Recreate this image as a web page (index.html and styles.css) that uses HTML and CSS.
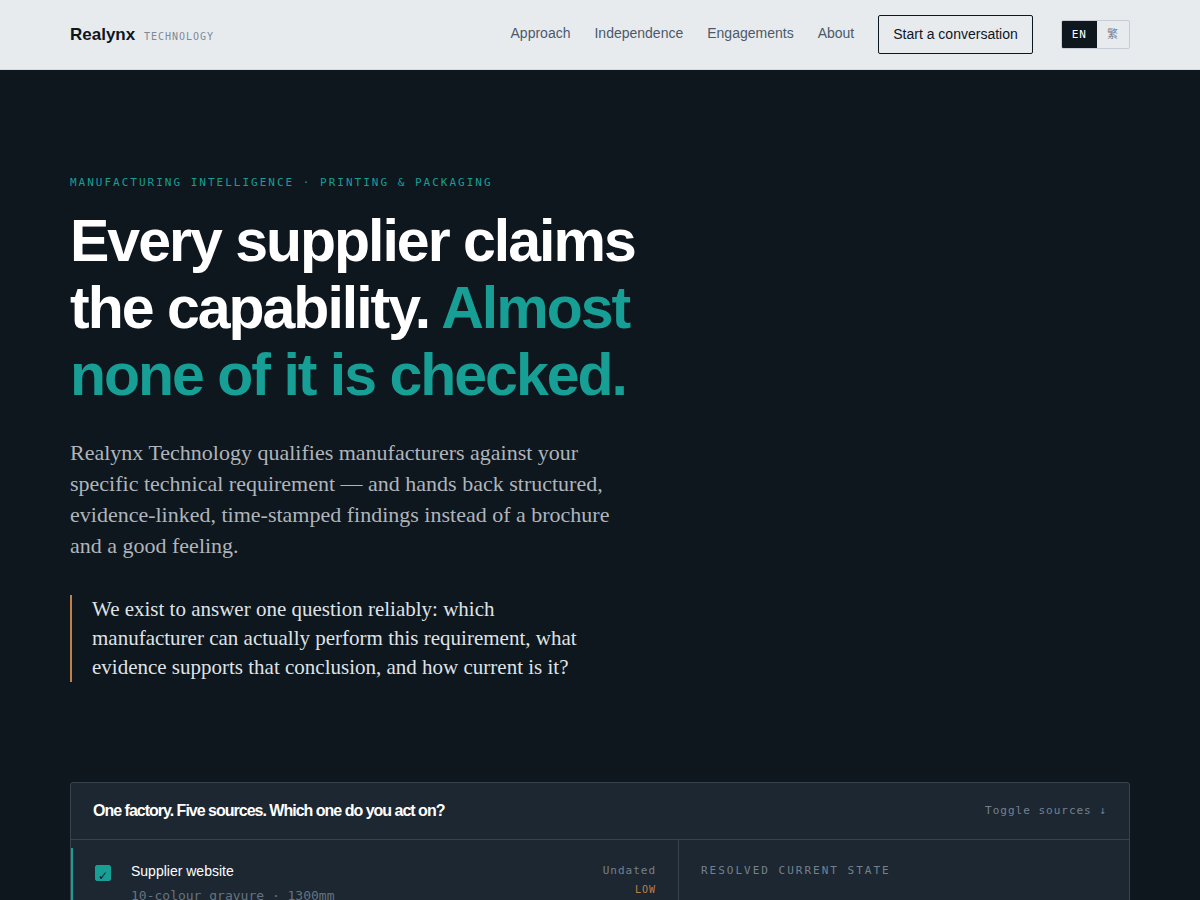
FILE: index.html
```
<!DOCTYPE html>
<html lang="en">
<head>
    <meta charset="UTF-8">
    <meta name="viewport" content="width=device-width, initial-scale=1.0">
    <title>Realynx Technology</title>
    <link rel="stylesheet" href="styles.css">
</head>
<body>
    <header class="site-header">
        <div class="wrap nav">
            <a class="brand" href="#">Realynx <span class="brand-sub">Technology</span></a>
            <nav class="nav-links">
                <a class="nav-link" href="#approach">Approach</a>
                <a class="nav-link" href="#independence">Independence</a>
                <a class="nav-link" href="#engagements">Engagements</a>
                <a class="nav-link" href="#about">About</a>
                <a class="nav-cta" href="#contact">Start a conversation</a>
            </nav>
            <div class="lang">
                <button class="active" type="button">EN</button>
                <button type="button" lang="zh-Hant">繁</button>
            </div>
        </div>
    </header>

    <main class="hero">
        <div class="wrap">
            <p class="eyebrow">Manufacturing Intelligence · Printing &amp; Packaging</p>
            <h1>Every supplier claims<br>the capability. <em>Almost<br>none of it is checked.</em></h1>
            <p class="lede">Realynx Technology qualifies manufacturers against your<br>specific technical requirement — and hands back structured,<br>evidence-linked, time-stamped findings instead of a brochure<br>and a good feeling.</p>
            <blockquote class="question">We exist to answer one question reliably: which<br>manufacturer can actually perform this requirement, what<br>evidence supports that conclusion, and how current is it?</blockquote>

            <!-- Source demo -->
            <section class="panel">
                <div class="panel-head">
                    <h2>One factory. Five sources. Which one do you act on?</h2>
                    <span class="hint">Toggle sources ↓</span>
                </div>
                <div class="panel-body">
                    <div class="sources">
                        <label class="source" for="src-website">
                            <input type="checkbox" id="src-website" checked>
                            <span class="source-text">
                                <span class="source-name">Supplier website</span>
                                <span class="source-claim">10-colour gravure · 1300mm</span>
                            </span>
                            <span class="source-meta">
                                <span class="source-date">Undated</span>
                                <span class="source-level">LOW</span>
                            </span>
                        </label>
                    </div>
                    <div class="resolved">
                        <h3>Resolved current state</h3>
                    </div>
                </div>
            </section>
        </div>
    </main>
</body>
</html>
```
FILE: styles.css
```
* {
    box-sizing: border-box;
}
body {
    margin: 0;
    background: #0e161e;
    color: #fff;
    font-family: "Liberation Sans", Arial, sans-serif;
}
a {
    color: inherit;
    text-decoration: none;
}
.wrap {
    max-width: 1124px;
    margin: 0 auto;
    padding: 0 32px;
}

/* Header */
.site-header {
    background: #e8ebee;
    border-bottom: 1px solid #d5dae0;
}
.nav {
    display: flex;
    align-items: center;
    min-height: 69px;
}
.brand {
    margin-right: auto;
    color: #0e161e;
    font-size: 17px;
    font-weight: bold;
}
.brand-sub {
    margin-left: 4px;
    color: #7d8996;
    font-family: "DejaVu Sans Mono", monospace;
    font-size: 10px;
    font-weight: normal;
    letter-spacing: 1px;
    text-transform: uppercase;
}
.nav-links {
    display: flex;
    align-items: center;
    gap: 24px;
    color: #4a5a6b;
    font-size: 14px;
    line-height: 20px;
}
.nav-link {
    padding-bottom: 4px;
}
.nav-cta {
    padding: 8px 14px 9px;
    border: 1px solid #0e161e;
    border-radius: 2px;
    color: #0e161e;
}
.lang {
    display: flex;
    margin-left: 28px;
    border: 1px solid #c6ccd3;
    border-radius: 2px;
    overflow: hidden;
}
.lang button {
    padding: 5px 10px;
    border: 0;
    background: none;
    color: #7d8996;
    font-family: "DejaVu Sans Mono", "Noto Sans CJK TC", monospace;
    font-size: 11px;
    line-height: 17px;
    letter-spacing: 1px;
}
.lang button.active {
    background: #0e161e;
    color: #fff;
}

/* Hero */
.hero {
    padding: 104px 0 96px;
}
.eyebrow {
    margin: 0 0 16px;
    color: #179e95;
    font-family: "DejaVu Sans Mono", monospace;
    font-size: 11px;
    line-height: 18px;
    letter-spacing: 2px;
    text-transform: uppercase;
}
h1 {
    margin: 0 0 28px;
    font-size: 59px;
    line-height: 67px;
    letter-spacing: -2px;
}
h1 em {
    color: #179e95;
    font-style: normal;
}
.lede {
    margin: 0 0 34px;
    color: #afb5bb;
    font-family: "Liberation Serif", serif;
    font-size: 22px;
    line-height: 31px;
}
.question {
    margin: 0 0 100px;
    padding-left: 20px;
    border-left: 2px solid #c17f4a;
    color: #dfe3e7;
    font-family: "Liberation Serif", serif;
    font-size: 21px;
    line-height: 29px;
}

/* Source panel */
.panel {
    background: #1c2732;
    border: 1px solid #36424c;
    border-radius: 3px;
}
.panel-head {
    display: flex;
    align-items: center;
    justify-content: space-between;
    padding: 16px 22px;
    border-bottom: 1px solid #36424c;
}
.panel-head h2 {
    margin: 0;
    font-size: 16px;
    line-height: 24px;
    letter-spacing: -1px;
}
.hint,
.source-date {
    color: #74818d;
    font-family: "DejaVu Sans Mono", monospace;
    font-size: 11px;
    line-height: 18px;
    letter-spacing: 1px;
}
.panel-body {
    display: grid;
    grid-template-columns: 607fr 451fr;
}
.sources {
    padding: 8px 0;
}
.source {
    display: flex;
    padding: 12px 22px;
    border-left: 2px solid #179e95;
}
.source input {
    appearance: none;
    display: grid;
    place-items: center;
    width: 16px;
    height: 16px;
    margin: 5px 20px 0 0;
    border-radius: 2px;
    border: 1px solid #74818d;
}
.source input:checked {
    border-color: #179e95;
    background: #179e95;
}
.source input:checked::before {
    content: "✓";
    padding-top: 3px;
    color: #0e161e;
    font-family: "DejaVu Sans", sans-serif;
    font-size: 12px;
    line-height: 14px;
}
.source-text,
.source-meta {
    display: flex;
    flex-direction: column;
}
.source-name {
    font-size: 14px;
    line-height: 23px;
}
.source-claim {
    color: #66737f;
    font-family: "DejaVu Sans Mono", monospace;
    font-size: 13px;
    line-height: 26px;
}
.source-meta {
    margin-left: auto;
    padding-top: 2px;
    text-align: right;
}
.source-level {
    color: #c17f4a;
    font-family: "DejaVu Sans Mono", monospace;
    font-size: 10px;
    line-height: 20px;
    letter-spacing: 1px;
}
.resolved {
    min-height: 320px;
    padding: 22px;
    border-left: 1px solid #36424c;
}
.resolved h3 {
    margin: 0;
    color: #74818d;
    font-family: "DejaVu Sans Mono", monospace;
    font-size: 11px;
    font-weight: normal;
    line-height: 18px;
    letter-spacing: 2px;
    text-transform: uppercase;
}
```
